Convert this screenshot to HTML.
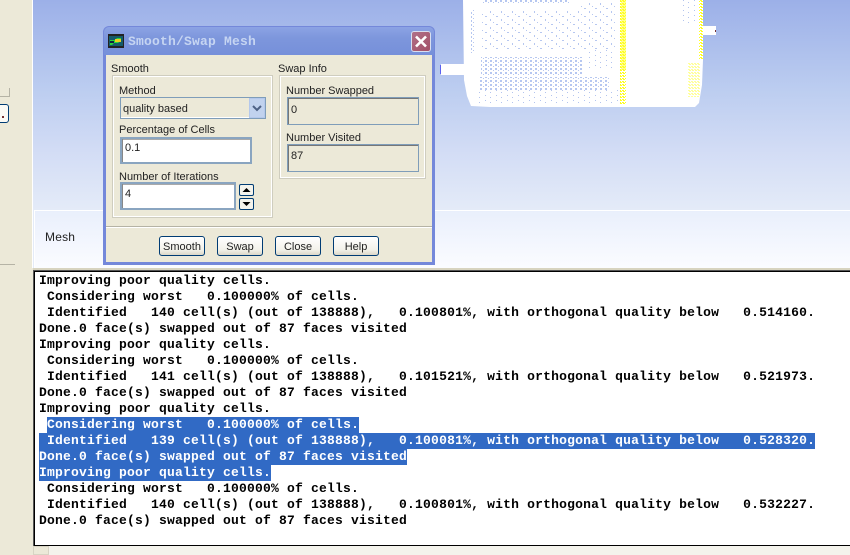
<!DOCTYPE html>
<html><head><meta charset="utf-8"><style>
html,body{margin:0;padding:0;background:#ece9d8}
body{width:850px;height:555px;position:relative;overflow:hidden;font-family:"Liberation Sans",sans-serif;font-size:11px;color:#000}
div{position:absolute;box-sizing:border-box}
.l{white-space:pre;line-height:14px;height:14px;color:#222}
.e{background:#fff;border:2px solid #8aa5c0;box-shadow:inset 1px 0 0 #888,inset 0 1px 0 #aaa}
.f{background:#ece9d8;border:1px solid #7f9db9;box-shadow:inset 1px 0 0 #777,inset 0 1px 0 #777}
.g{border:1px solid #cfcdbf;box-shadow:0 0 0 1px #fff inset}
.b{top:236px;width:46px;height:20px;border:1px solid #003c74;border-radius:3px;background:linear-gradient(#fff,#f3f2ea 70%,#dcd8c8);text-align:center;line-height:20px;color:#222}
#c{left:39px;top:273px;font:bold 13px/16px "Liberation Mono",monospace;letter-spacing:.2px;white-space:pre;color:#000}
#c span{background:#316ac5;color:#fff;display:inline-block;height:16px;vertical-align:top}
</style></head><body>
<div style="left:0;top:88px;width:10px;height:9px;border-right:1px solid #b5b3a5;border-bottom:1px solid #b5b3a5"></div>
<div style="left:-6px;top:104px;width:15px;height:19px;border:1px solid #003c74;border-radius:3px;background:#fbfaf5"></div>
<div style="left:2px;top:116px;width:2px;height:2px;background:#733"></div>
<div style="left:0;top:264px;width:15px;height:1px;background:#b5b3a5"></div>
<div style="left:32px;top:0;width:1px;height:268px;background:#fff"></div>
<div style="left:33px;top:0;width:817px;height:268px;background:linear-gradient(#9cb0e8 0,#bccdf0 90px,#d2dcf5 150px,#e4ebf8 210px)"></div>
<div style="left:34px;top:210px;width:816px;height:58px;background:linear-gradient(#e9effc,#fbfcff);border-top:1px solid #fff;border-left:1px solid #fff"></div>
<div style="left:45px;top:230px;font:12px/14px 'Liberation Sans',sans-serif;letter-spacing:.2px;color:#222">Mesh</div>

<svg style="position:absolute;left:430px;top:0" width="300" height="115" viewBox="0 0 300 115">
<defs>
<pattern id="p1" width="11" height="8" patternUnits="userSpaceOnUse"><rect width="2" height="1" fill="#b6c7f0"/><rect x="5" y="3" width="1" height="2" fill="#b6c7f0"/><rect x="8" y="6" width="1" height="1" fill="#b6c7f0"/></pattern>
<pattern id="p2" width="5" height="4" patternUnits="userSpaceOnUse"><rect width="2" height="2" fill="#b6c7f0"/><rect x="3" y="2" width="1" height="1" fill="#b6c7f0"/></pattern>
<pattern id="p3" width="11" height="5" patternUnits="userSpaceOnUse"><rect width="1" height="1" fill="#b3c4ee"/><rect x="5" y="2" width="1" height="1" fill="#b3c4ee"/></pattern>
<pattern id="p4" width="3" height="3" patternUnits="userSpaceOnUse"><rect width="2" height="1" fill="#ffff22"/><rect y="1" x="1" width="2" height="1" fill="#ffff22"/></pattern>
</defs>
<rect x="11" y="64" width="24" height="11" fill="#fff"/>
<rect x="10" y="65" width="1" height="9" fill="#5a60f0"/>
<rect x="270" y="26" width="16" height="9" fill="#fff"/>
<rect x="285" y="30" width="1" height="2" fill="#733"/>
<path d="M33 0H273V60L272 85L269 103L265 107H60L41 106L37 96L34 80Z" fill="#fff"/>
<rect x="52" y="0" width="88" height="3" fill="url(#p2)"/>
<rect x="52" y="10" width="108" height="41" fill="url(#p1)"/>
<rect x="150" y="3" width="36" height="48" fill="url(#p1)"/>
<rect x="41" y="10" width="4" height="43" fill="url(#p2)"/>
<rect x="51" y="57" width="102" height="18" fill="url(#p2)"/>
<rect x="50" y="77" width="130" height="13" fill="url(#p2)"/>
<rect x="47" y="90" width="143" height="15" fill="url(#p3)"/>
<rect x="155" y="50" width="32" height="20" fill="url(#p3)"/>
<rect x="190" y="0" width="6" height="104" fill="url(#p4)"/>
<rect x="191" y="0" width="5" height="70" fill="#ffff22" opacity=".5"/>
<rect x="269" y="0" width="4" height="60" fill="url(#p4)"/>
<rect x="258" y="62" width="12" height="35" fill="url(#p4)" opacity=".45"/>
<rect x="250" y="0" width="19" height="25" fill="url(#p3)"/>
</svg>

<!-- dialog -->
<div style="left:103px;top:26px;width:332px;height:239px;background:#7488da;border-radius:6px 6px 0 0"></div>
<div style="left:104px;top:27px;width:330px;height:28px;background:linear-gradient(#8ca3e4,#7d96dc 40%,#7690da);border-radius:5px 5px 0 0"></div>
<div style="left:106px;top:55px;width:326px;height:207px;background:#ece9d8"></div>
<svg style="position:absolute;left:108px;top:34px" width="16" height="14" viewBox="0 0 16 14"><rect width="16" height="14" fill="#222"/><rect x="1" y="2" width="14" height="10" fill="#145a6a"/><path d="M2 6h5l2-2h4v3l-3 2H6l-2 2H2z" fill="#2ad43a"/><rect x="7" y="5" width="6" height="3" fill="#e8d020"/><rect x="2" y="7" width="4" height="2" fill="#102040"/></svg>
<div style="left:128px;top:34px;font:bold 13px/15px 'Liberation Mono',monospace;letter-spacing:.2px;color:#c6d5f2;white-space:pre">Smooth/Swap Mesh</div>
<div style="left:411px;top:31px;width:20px;height:21px;background:linear-gradient(135deg,#b07088,#a35068);border:1px solid #d8dff0;border-radius:3px"></div>
<svg style="position:absolute;left:411px;top:31px" width="20" height="21"><path d="M5 5.500L15 15.500M15 5.500L5 15.500" stroke="#fff" stroke-width="2.600"/></svg>

<div class="l" style="left:111px;top:62px">Smooth</div>
<div class="l" style="left:278px;top:62px">Swap Info</div>
<div class="g" style="left:112px;top:75px;width:161px;height:143px"></div>
<div class="g" style="left:279px;top:75px;width:147px;height:104px"></div>

<div class="l" style="left:119px;top:84px">Method</div>
<div style="left:120px;top:97px;width:146px;height:22px;background:#ece9d8;border:1px solid #7f9db9;box-shadow:inset 0 -1px 0 #fff"></div>
<div class="l" style="left:123px;top:102px">quality based</div>
<div style="left:249px;top:98px;width:16px;height:20px;background:#c1d2ee;border:1px solid #b4c8ec"></div>
<svg style="position:absolute;left:249px;top:98px" width="16" height="20"><path d="M4 8L8 12L12 8" fill="none" stroke="#4d6185" stroke-width="2"/></svg>

<div class="l" style="left:119px;top:123px">Percentage of Cells</div>
<div class="e" style="left:120px;top:137px;width:132px;height:27px"></div>
<div class="l" style="left:125px;top:141px">0.1</div>
<div class="l" style="left:119px;top:170px">Number of Iterations</div>
<div class="e" style="left:120px;top:182px;width:116px;height:28px"></div>
<div class="l" style="left:125px;top:187px">4</div>
<div style="left:239px;top:184px;width:15px;height:12px;border:1px solid #003c74;border-radius:2px;background:#f4f3ec"></div>
<div style="left:239px;top:198px;width:15px;height:12px;border:1px solid #003c74;border-radius:2px;background:#f4f3ec"></div>
<svg style="position:absolute;left:239px;top:184px" width="15" height="26"><path d="M3.500 8L7.500 4L11.500 8Z" fill="#000"/><path d="M3.500 18L7.500 22L11.500 18Z" fill="#000"/></svg>

<div class="l" style="left:286px;top:84px">Number Swapped</div>
<div class="f" style="left:287px;top:97px;width:132px;height:28px"></div>
<div class="l" style="left:291px;top:103px">0</div>
<div class="l" style="left:286px;top:131px">Number Visited</div>
<div class="f" style="left:287px;top:144px;width:132px;height:28px"></div>
<div class="l" style="left:291px;top:149px">87</div>

<div style="left:106px;top:226px;width:326px;height:1px;background:#b5b3a5"></div>
<div style="left:106px;top:227px;width:326px;height:1px;background:#fff"></div>
<div class="b" style="left:159px">Smooth</div>
<div class="b" style="left:217px">Swap</div>
<div class="b" style="left:275px">Close</div>
<div class="b" style="left:333px">Help</div>

<!-- console -->
<div style="left:33px;top:268px;width:817px;height:2px;background:#d8d4c0"></div>
<div style="left:33px;top:270px;width:817px;height:276px;background:#fff;border-top:1px solid #555;border-left:1px solid #555"></div>
<div style="left:34px;top:271px;width:816px;height:275px;background:#fff;border:1px solid #000;border-right:0"></div>
<div id="c">Improving poor quality cells.
 Considering worst   0.100000% of cells.
 Identified   140 cell(s) (out of 138888),   0.100801%, with orthogonal quality below   0.514160.
Done.0 face(s) swapped out of 87 faces visited
Improving poor quality cells.
 Considering worst   0.100000% of cells.
 Identified   141 cell(s) (out of 138888),   0.101521%, with orthogonal quality below   0.521973.
Done.0 face(s) swapped out of 87 faces visited
Improving poor quality cells.
 <span>Considering worst   0.100000% of cells.</span>
<span> Identified   139 cell(s) (out of 138888),   0.100081%, with orthogonal quality below   0.528320.</span>
<span>Done.0 face(s) swapped out of 87 faces visited</span>
<span>Improving poor quality cells.</span>
 Considering worst   0.100000% of cells.
 Identified   140 cell(s) (out of 138888),   0.100801%, with orthogonal quality below   0.532227.
Done.0 face(s) swapped out of 87 faces visited</div>
<div style="left:33px;top:546px;width:817px;height:9px;background:#f4f3ec"></div>
<div style="left:33px;top:546px;width:16px;height:9px;background:#ece9d8;border:1px solid #d8d4c4"></div>
</body></html>
